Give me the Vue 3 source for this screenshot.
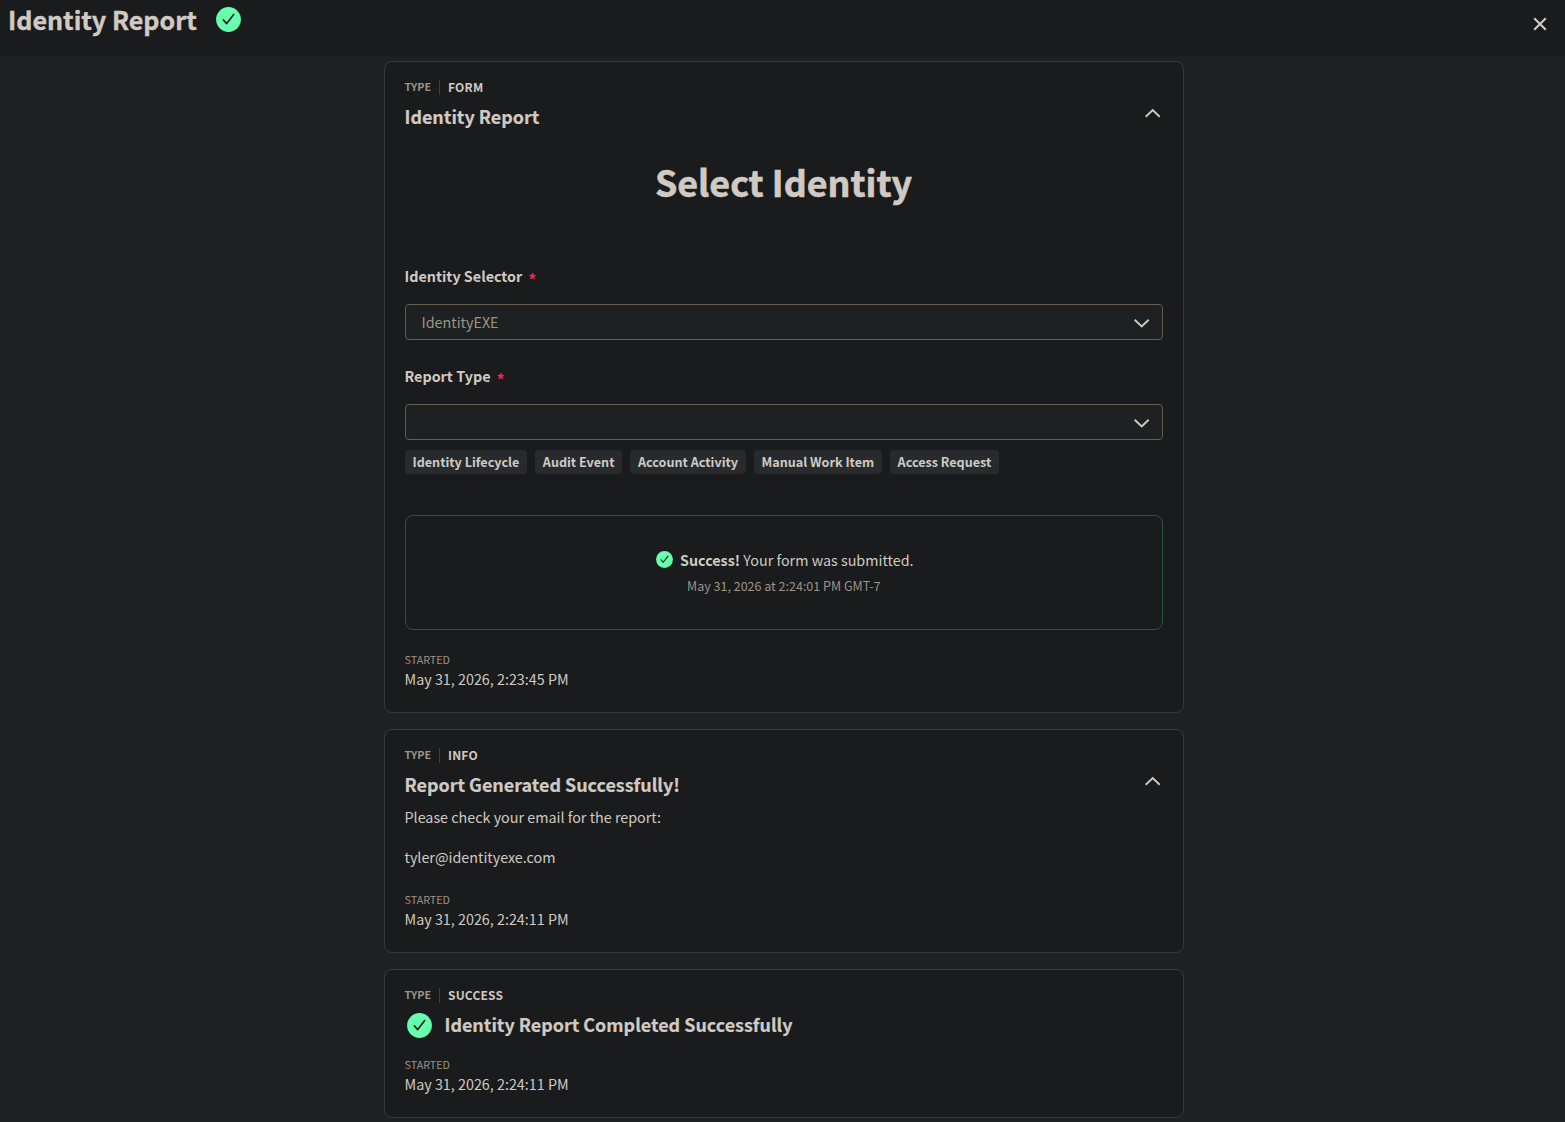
<template>
  <div class="page">
    <header class="topbar">
      <h1 class="topbar-title">Identity Report</h1>
      <svg class="check" viewBox="0 0 25 25">
        <circle cx="12.5" cy="12.5" r="12.4" />
        <path d="M7.3 12.9l3.4 3.7 7-9.1" />
      </svg>
      <button class="close" aria-label="Close">
        <svg width="14" height="14" viewBox="0 0 14 14">
          <path d="M1.2 1.2l11.6 11.6M12.8 1.2L1.2 12.8" />
        </svg>
      </button>
    </header>

    <main class="cards">
      <section v-for="card in cards" :key="card.type" class="card">
        <div class="card-head">
          <div>
            <div class="type">
              <span class="type-label">TYPE</span>
              <span class="type-value">{{ card.type }}</span>
            </div>
            <div class="card-title">
              <svg v-if="card.type === 'SUCCESS'" class="check" viewBox="0 0 25 25">
                <circle cx="12.5" cy="12.5" r="12.4" />
                <path d="M7.3 12.9l3.4 3.7 7-9.1" />
              </svg>
              <h2>{{ card.title }}</h2>
            </div>
          </div>
          <button v-if="card.collapsible" class="toggle" aria-label="Toggle" @click="card.open = !card.open">
            <svg width="16" height="9" viewBox="0 0 16 9" :class="{ flipped: !card.open }">
              <path d="M.7 7.7l7-6.7 7 6.7" />
            </svg>
          </button>
        </div>

        <div v-if="card.type === 'FORM' && card.open" class="form">
          <h3>Select Identity</h3>
          <div v-for="field in fields" :key="field.label" class="field">
            <label>{{ field.label }}<span class="required">*</span></label>
            <div class="select">
              <span>{{ field.value }}</span>
              <svg width="16" height="9" viewBox="0 0 16 9">
                <path d="M.7 .7l7 6.7 7-6.7" />
              </svg>
            </div>
          </div>
          <div class="tags">
            <span v-for="tag in tags" :key="tag" class="tag">{{ tag }}</span>
          </div>
          <div class="submitted">
            <p class="submitted-text">
              <svg class="check small" viewBox="0 0 25 25">
                <circle cx="12.5" cy="12.5" r="12.4" />
                <path d="M7.3 12.9l3.4 3.7 7-9.1" />
              </svg>
              <span><strong>Success!</strong> Your form was submitted.</span>
            </p>
            <p class="submitted-date">May 31, 2026 at 2:24:01 PM GMT-7</p>
          </div>
        </div>

        <div v-if="card.type === 'INFO' && card.open" class="info">
          <p>Please check your email for the report:</p>
          <p>tyler@identityexe.com</p>
        </div>

        <div class="started">
          <span class="started-label">STARTED</span>
          <span class="started-date">{{ card.started }}</span>
        </div>
      </section>
    </main>
  </div>
</template>

<script setup>
import { ref } from 'vue'

const cards = ref([
  { type: 'FORM', title: 'Identity Report', started: 'May 31, 2026, 2:23:45 PM', collapsible: true, open: true },
  { type: 'INFO', title: 'Report Generated Successfully!', started: 'May 31, 2026, 2:24:11 PM', collapsible: true, open: true },
  { type: 'SUCCESS', title: 'Identity Report Completed Successfully', started: 'May 31, 2026, 2:24:11 PM', collapsible: false, open: true },
])

const fields = [
  { label: 'Identity Selector', value: 'IdentityEXE' },
  { label: 'Report Type', value: '' },
]

const tags = ['Identity Lifecycle', 'Audit Event', 'Account Activity', 'Manual Work Item', 'Access Request']
</script>

<style>
body {
  background: #1d2122;
}
</style>

<style scoped>
.page {
  height: 1122px;
  overflow: hidden;
  background: #1d2122;
  color: #d0cac3;
  font-family: "Noto Sans CJK SC", "Noto Sans", sans-serif;
  font-size: 14.33px;
  line-height: 20px;
}

h1,
h2,
h3,
p {
  margin: 0;
}

button {
  padding: 0;
  border: none;
  background: none;
  cursor: pointer;
}

svg {
  display: block;
  flex: none;
  overflow: visible;
}

path {
  fill: none;
  stroke: #d0cac3;
  stroke-width: 1.9;
}

.check {
  width: 25px;
  height: 25px;
}

.check.small {
  width: 17px;
  height: 17px;
}

.check circle {
  fill: #66ffad;
}

.check path {
  stroke: #181a1b;
  stroke-width: 1.6;
  stroke-linecap: round;
  stroke-linejoin: round;
}

.topbar {
  display: flex;
  align-items: flex-start;
  box-sizing: border-box;
  height: 56px;
  padding: 5px 18px 0 8px;
  background: #1a1b1c;
}

.topbar .check {
  margin-top: 2px;
}

.topbar-title {
  margin-right: 19px;
  font-size: 25.1px;
  line-height: 28px;
  -webkit-text-stroke: 0.4px #d0cac3;
}

.close {
  margin: 12px 0 0 auto;
}

.close path {
  stroke-width: 2.1;
}

.cards {
  display: flex;
  flex-direction: column;
  align-items: center;
  gap: 16px;
  padding: 5px 0 0 3px;
  text-indent: -0.5px;
}

.card {
  box-sizing: border-box;
  width: 800px;
  padding: 15px 20px 23px;
  border: 1px solid #363a3c;
  border-radius: 8px;
  background: #1a1b1c;
}

.card-head {
  display: flex;
  justify-content: space-between;
}

.type {
  display: flex;
  align-items: center;
  height: 20px;
}

.type-label {
  width: 34px;
  height: 15px;
  margin-right: 8px;
  border-right: 1px solid #3b3f42;
  color: #9d9486;
  font-size: 10.75px;
  font-weight: bold;
  line-height: 13px;
}

.type-value {
  font-size: 12px;
  font-weight: bold;
  letter-spacing: 0.2px;
  text-indent: 0;
}

.card-title {
  display: flex;
  align-items: center;
  height: 38px;
  margin-bottom: 2px;
}

.card-title .check {
  margin: 2px 13px 0 2px;
}

h2 {
  font-size: 17.93px;
  line-height: 24px;
  -webkit-text-stroke: 0.2px #d0cac3;
}

.toggle {
  align-self: flex-start;
  margin: 32px 2px 0 0;
}

.flipped {
  transform: rotate(180deg);
}

h3 {
  margin: 20px 0 61px;
  font-size: 35.85px;
  line-height: 48px;
  text-align: center;
  text-indent: -1px;
  -webkit-text-stroke: 0.6px #d0cac3;
}

.field + .field {
  margin-top: 26px;
}

label {
  display: block;
  margin-bottom: 18px;
  font-weight: bold;
}

.required {
  position: relative;
  top: 4px;
  margin-left: 6px;
  color: #f02850;
  font-size: 16px;
  line-height: 1;
}

.select {
  display: flex;
  align-items: center;
  justify-content: space-between;
  box-sizing: border-box;
  height: 36px;
  padding: 0 12px 0 16px;
  border: 1px solid #645d50;
  border-radius: 4px;
  background: #1d2122;
  color: #9d9486;
}

.select svg {
  margin-top: 2px;
}

.tags {
  display: flex;
  gap: 8px;
  margin-top: 10px;
}

.tag {
  padding: 0 8px;
  border-radius: 4px;
  background: #272b2d;
  font-size: 12.6px;
  font-weight: bold;
  line-height: 24px;
}

.submitted {
  box-sizing: border-box;
  height: 115px;
  margin-top: 41px;
  padding-top: 34px;
  border: 1px solid #28573f;
  border-radius: 8px;
  text-align: center;
}

.submitted-text {
  display: flex;
  align-items: center;
  justify-content: center;
  gap: 7.5px;
  padding-left: 1.5px;
}

.submitted-text .check {
  margin-top: -1px;
}

.submitted-date {
  margin-top: 6px;
  color: #9d9486;
  font-size: 12.5px;
}

.form {
  margin-bottom: 20px;
}

.info {
  display: flex;
  flex-direction: column;
  gap: 20px;
  margin: 2px 0 23px;
}

.started {
  display: flex;
  flex-direction: column;
}

.card-head + .started {
  margin-top: 10px;
}

.started-label {
  height: 19px;
  color: #9d9486;
  font-size: 10.75px;
}
</style>
